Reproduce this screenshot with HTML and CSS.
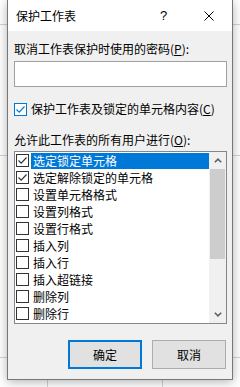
FILE: index.html
```html
<!DOCTYPE html>
<html lang="zh-CN">
<head>
    <meta charset="UTF-8">
    <meta name="viewport" content="width=device-width, initial-scale=1.0">
    <link rel="stylesheet" href="styles.css">
</head>
<body>
    <div class="dialog">
        <div class="titlebar">
            <span class="title">保护工作表</span>
            <span class="help">?</span>
            <span class="close">
                <svg width="10" height="10" viewBox="0 0 10 10"><path d="M0.5 0.5L9.5 9.5M9.5 0.5L0.5 9.5" stroke="#000" stroke-width="1" fill="none"/></svg>
            </span>
        </div>
        <div class="content">
            <div class="label label-top">取消工作表保护时使用的密码(<u>P</u>):</div>
            <div class="password"></div>
            <div class="check-row">
                <span class="box box-main">
                    <svg width="11" height="11" viewBox="0 0 11 11"><path d="M1.5 5.5L4.2 8.2L9.5 2.5" stroke="#0078d7" stroke-width="1.2" fill="none"/></svg>
                </span>
                <span>保护工作表及锁定的单元格内容(<u>C</u>)</span>
            </div>
            <div class="label label-list">允许此工作表的所有用户进行(<u>O</u>):</div>
            <div class="listbox">
                <ul class="items">
                    <li class="item"><span class="box checked"><svg width="11" height="11" viewBox="0 0 11 11"><path d="M1.5 5.5L4.2 8.2L9.5 2.5" stroke="#333" stroke-width="1.2" fill="none"/></svg></span><span class="text selected">选定锁定单元格</span></li>
                    <li class="item"><span class="box checked"><svg width="11" height="11" viewBox="0 0 11 11"><path d="M1.5 5.5L4.2 8.2L9.5 2.5" stroke="#333" stroke-width="1.2" fill="none"/></svg></span><span class="text">选定解除锁定的单元格</span></li>
                    <li class="item"><span class="box"></span><span class="text">设置单元格格式</span></li>
                    <li class="item"><span class="box"></span><span class="text">设置列格式</span></li>
                    <li class="item"><span class="box"></span><span class="text">设置行格式</span></li>
                    <li class="item"><span class="box"></span><span class="text">插入列</span></li>
                    <li class="item"><span class="box"></span><span class="text">插入行</span></li>
                    <li class="item"><span class="box"></span><span class="text">插入超链接</span></li>
                    <li class="item"><span class="box"></span><span class="text">删除列</span></li>
                    <li class="item"><span class="box"></span><span class="text">删除行</span></li>
                </ul>
                <div class="scrollbar">
                    <div class="arrow">
                        <svg width="8" height="5" viewBox="0 0 8 5"><path d="M0.8 4.3L4 1.2L7.2 4.3" stroke="#606060" stroke-width="1.6" fill="none"/></svg>
                    </div>
                    <div class="thumb"></div>
                    <div class="track"></div>
                    <div class="arrow">
                        <svg width="8" height="5" viewBox="0 0 8 5"><path d="M0.8 0.7L4 3.8L7.2 0.7" stroke="#606060" stroke-width="1.6" fill="none"/></svg>
                    </div>
                </div>
            </div>
            <div class="buttons">
                <button class="btn btn-ok">确定</button>
                <button class="btn">取消</button>
            </div>
        </div>
    </div>
</body>
</html>
```

FILE: styles.css
```css
body {
    margin: 0;
    padding: 0;
    min-height: 387px;
    font-family: "Noto Sans CJK SC", "Noto Sans", sans-serif;
    font-size: 12px;
    color: #000;
    background-color: #fff;
    background-image:
        linear-gradient(to right, transparent 47px, #d4d4d4 47px, #d4d4d4 48px, transparent 48px, transparent 162px, #d4d4d4 162px, #d4d4d4 163px, transparent 163px),
        linear-gradient(to bottom, transparent 24px, #d4d4d4 24px, #d4d4d4 25px, transparent 25px, transparent 155px, #d4d4d4 155px, #d4d4d4 156px, transparent 156px, transparent 357px, #d4d4d4 357px, #d4d4d4 358px, transparent 358px);
    overflow: hidden;
}
.dialog {
    margin-left: 7px;
    width: 224px;
    border: 1px solid #777;
    border-top: none;
    background-color: #f0f0f0;
    box-shadow: 0 2px 10px rgba(0,0,0,0.3);
}
.titlebar {
    display: flex;
    align-items: center;
    height: 31px;
    background-color: #fff;
}
.title {
    flex: 1;
    padding-left: 8px;
    line-height: 16px;
}
.help {
    width: 45px;
    text-align: center;
    font-family: "Liberation Sans", sans-serif;
    font-size: 13px;
    line-height: 16px;
}
.close {
    width: 46px;
    display: flex;
    justify-content: center;
}
.close svg {
    display: block;
}
.content {
    padding: 10px 5px 10px 6px;
}
.label {
    line-height: 16px;
    height: 16px;
}
.password {
    margin-top: 4px;
    height: 24px;
    border: 1px solid #a0a0a0;
    background-color: #fff;
}
.check-row {
    display: flex;
    align-items: center;
    height: 16px;
    margin-top: 14px;
    line-height: 16px;
}
.box {
    width: 11px;
    height: 11px;
    border: 1px solid #333;
    background-color: #fff;
    flex: none;
}
.box svg {
    display: block;
}
.box-main {
    border-color: #0078d7;
    margin-right: 4px;
}
.label-list {
    margin-top: 15px;
}
.listbox {
    display: flex;
    margin-top: 3px;
    height: 171px;
    border: 1px solid #828790;
    background-color: #fff;
}
.items {
    flex: 1;
    list-style-type: none;
    margin: 0;
    padding: 0;
}
.item {
    display: flex;
    align-items: center;
    height: 17px;
    padding-left: 1px;
}
.item .box {
    margin-right: 2px;
}
.text {
    flex: 1;
    height: 16px;
    line-height: 16px;
    padding-left: 2px;
    white-space: nowrap;
}
.text.selected {
    background-color: #0078d7;
    color: #fff;
}
.scrollbar {
    width: 17px;
    display: flex;
    flex-direction: column;
    background-color: #f0f0f0;
}
.arrow {
    height: 17px;
    display: flex;
    align-items: center;
    justify-content: center;
}
.arrow svg {
    display: block;
}
.thumb {
    height: 90px;
    margin: 0 1px 0 1px;
    background-color: #cdcdcd;
}
.track {
    flex: 1;
}
.buttons {
    display: flex;
    justify-content: flex-end;
    gap: 10px;
    margin-top: 16px;
    margin-right: 1px;
}
.btn {
    width: 74px;
    height: 29px;
    border: 1px solid #adadad;
    background-color: #e1e1e1;
    font-family: "Noto Sans CJK SC", "Noto Sans", sans-serif;
    font-size: 12px;
    color: #000;
    padding: 0;
}
.btn-ok {
    border: 2px solid #0078d7;
}
```
